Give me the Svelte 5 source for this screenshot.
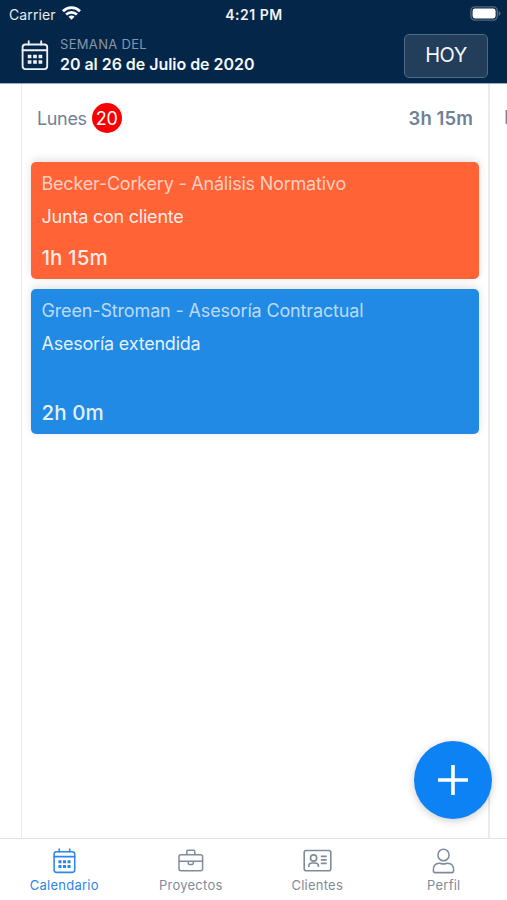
<script>
  const entries = [
    { kind: 'orange', project: 'Becker-Corkery - Análisis Normativo', task: 'Junta con cliente', time: '1h 15m' },
    { kind: 'blue', project: 'Green-Stroman - Asesoría Contractual', task: 'Asesoría extendida', time: '2h 0m' }
  ];
  const tabs = [
    { id: 'calendar', label: 'Calendario' },
    { id: 'projects', label: 'Proyectos' },
    { id: 'clients', label: 'Clientes' },
    { id: 'profile', label: 'Perfil' }
  ];
  let active = $state('calendar');
</script>

{#snippet calendarIcon(w, h)}
  <svg width={w} height={h} viewBox="0 0 28 32" fill="none" stroke="currentColor" stroke-width="1.9" stroke-linecap="round">
    <rect x="1.2" y="4.6" width="25.4" height="25.4" rx="2.8" />
    <path d="M1.2 10.6H26.6M7.5 1.2V4.6M20.4 1.2V4.6" />
    <path d="M6.5 15.2h3.8v3.6H6.5zM12.1 15.2h3.8v3.6h-3.8zM17.7 15.2h3.8v3.6h-3.8zM6.5 20.9h3.8v3.6H6.5zM12.1 20.9h3.8v3.6h-3.8zM17.7 20.9h3.8v3.6h-3.8z" fill="currentColor" stroke="none" />
  </svg>
{/snippet}

<div class="app">
  <header>
    <div class="status">
      <div class="carrier">
        <span>Carrier</span>
        <svg width="19" height="14" viewBox="0 0 19 14" fill="none" stroke="#fff" stroke-width="2.7">
          <path d="M1 5.2C5.8.5 13.2.5 18 5.2M4.1 8.5C7.2 5.6 11.8 5.6 14.9 8.5" />
          <path d="M9.5 13.7L6.5 10.7C8.2 9.1 10.8 9.1 12.5 10.7Z" fill="#fff" stroke="none" />
        </svg>
      </div>
      <span class="clock">4:21 PM</span>
      <svg class="battery" width="31" height="15" viewBox="0 0 31 15">
        <rect x=".9" y=".9" width="26.4" height="13.2" rx="4" fill="none" stroke="#53677e" stroke-width="1.4" />
        <rect x="2.6" y="2.6" width="23" height="9.8" rx="2.4" fill="#fff" />
        <path d="M28.6 5.1Q30.6 5.8 30.6 7.5T28.6 9.9Z" fill="#53677e" />
      </svg>
    </div>
    <div class="week">
      <span class="week-icon">{@render calendarIcon(28, 31)}</span>
      <div class="range">
        <span class="caption">SEMANA DEL</span>
        <span class="dates">20 al 26 de Julio de 2020</span>
      </div>
      <button class="today"><span>HOY</span></button>
    </div>
  </header>

  <main>
    <section class="day">
      <div class="day-head">
        <span class="name">Lunes</span>
        <span class="num">20</span>
        <span class="total">3h 15m</span>
      </div>
      {#each entries as e}
        <article class={e.kind}>
          <span class="project">{e.project}</span>
          <span class="task">{e.task}</span>
          <span class="time">{e.time}</span>
        </article>
      {/each}
    </section>
    <section class="next"><span>M</span></section>
    <button class="add" aria-label="Agregar">
      <svg width="30" height="30" viewBox="0 0 30 30" stroke="#fff" stroke-width="3.6"><path d="M0 15H30M15 0V30" /></svg>
    </button>
  </main>

  <nav>
    {#each tabs as t}
      <button class="tab" class:active={active === t.id} onclick={() => (active = t.id)}>
        <span class="glyph">
          {#if t.id === 'calendar'}
            {@render calendarIcon(23, 26)}
          {:else if t.id === 'projects'}
            <svg width="26" height="24" viewBox="0 0 26 24" fill="none" stroke="currentColor" stroke-width="1.5">
              <rect x="1" y="5.7" width="23.6" height="16" rx="2" />
              <path d="M8.8 5.7V2.6Q8.8 1.3 10 1.3H15.6Q16.8 1.3 16.8 2.6V5.7M1 12.2H24.6M10.3 12.2V14.2Q10.3 15.6 11.6 15.6H14Q15.3 15.6 15.3 14.2V12.2" />
            </svg>
          {:else if t.id === 'clients'}
            <svg width="29" height="24" viewBox="0 0 29 24" fill="none" stroke="currentColor" stroke-width="1.6">
              <rect x="1.2" y="1.5" width="26.6" height="20.2" rx="2" />
              <circle cx="10.6" cy="9" r="3.1" />
              <path d="M5.8 18V17Q5.8 14 9 14H12.2Q15.4 14 15.4 17V18M17.8 7.4H23.7M17.8 10.9H23.7M17.8 14.4H23.7" />
            </svg>
          {:else}
            <svg width="23" height="26" viewBox="0 0 24 26" preserveAspectRatio="none" fill="none" stroke="currentColor" stroke-width="1.6">
              <circle cx="12" cy="7" r="5.8" />
              <path d="M3.5 24.6Q1.4 24.6 1.4 22.5C1.4 17.5 4 15.3 7.6 15.3C9.3 15.3 10 16 12 16S14.7 15.3 16.4 15.3C20 15.3 22.6 17.5 22.6 22.5Q22.6 24.6 20.5 24.6Z" />
            </svg>
          {/if}
        </span>
        <span class="label">{t.label}</span>
      </button>
    {/each}
  </nav>
</div>

<style>
  :global(body) { margin: 0; background: #fff; }
  .app {
    width: 507px; height: 900px; display: flex; flex-direction: column;
    overflow: hidden; position: relative; background: #fff;
    font-family: Inter, "Liberation Sans", sans-serif; white-space: nowrap;
  }
  .app * { box-sizing: border-box; }
  button { font-family: inherit; border: 0; padding: 0; margin: 0; background: none; cursor: pointer; }
  svg { display: block; flex: none; }
  header { height: 84px; flex: none; background: #042648; border-bottom: 1px solid #9aabbc; color: #fff; }
  .status { height: 28px; display: grid; grid-template-columns: 1fr auto 1fr; align-items: center; padding: 0 6px 0 9px; }
  .carrier { display: flex; align-items: center; gap: 6px; font-size: 14px; letter-spacing: .1px; color: #e6ebf0; }
  .carrier svg { margin-top: -2px; }
  .clock { font-size: 14px; letter-spacing: .5px; font-weight: 600; color: #f1f4f7; margin-right: 2px; }
  .battery { justify-self: end; margin-top: -2px; }
  .week { height: 55px; display: flex; align-items: center; padding: 0 19px 0 21px; }
  .week-icon { width: 28px; margin-right: 11px; color: #eef2f6; }
  .range { display: flex; flex-direction: column; flex: 1; margin-top: -1px; }
  .caption { font-size: 13px; letter-spacing: .32px; line-height: 18px; color: #8798aa; }
  .dates { font-size: 16px; letter-spacing: -.04px; line-height: 22px; font-weight: 600; color: #f4f7fa; }
  .today {
    width: 84px; height: 44px; border: 1px solid #506880; border-radius: 5px; padding-bottom: 2px;
    background: #223e5b; color: #f4f7fa; font-size: 20px; letter-spacing: -.6px;
  }
  main { flex: 1; min-height: 0; display: flex; position: relative; padding-left: 21px; background: #fff; }
  .day { width: 469px; flex: none; border: solid #ebebeb; border-width: 0 2px 0 1px; padding: 0 9px; display: flex; flex-direction: column; }
  .day-head { height: 68px; display: flex; align-items: center; padding: 0 6px; flex: none; margin-bottom: 10px; color: #718096; font-size: 18px; }
  .name { letter-spacing: -.35px; }
  .num { width: 30px; height: 30px; border-radius: 50%; background: #fb0000; color: #fff; display: grid; place-items: center; margin-left: 5px; letter-spacing: -.2px; }
  .total { margin-left: auto; font-size: 18.5px; letter-spacing: .1px; font-weight: 600; }
  article {
    height: 117px; margin-bottom: 10px; border-radius: 5px; padding: 10px 10px 9px 10.5px; flex: none;
    display: flex; flex-direction: column; color: rgba(255, 255, 255, .9);
    box-shadow: 0 -2px 9px rgba(0, 0, 0, .13);
  }
  .orange { background: #ff6336; }
  .blue { height: 145px; background: #218ae5; }
  .project { font-size: 18px; letter-spacing: -.21px; line-height: 23px; opacity: .78; }
  .blue .project { letter-spacing: -.15px; }
  .task { font-size: 18px; letter-spacing: -.22px; line-height: 23px; margin-top: 10px; }
  .time { font-size: 20.5px; letter-spacing: .1px; line-height: 24px; margin-top: auto; font-weight: 500; }
  .next { padding: 23px 0 0 14px; color: #718096; font-size: 18px; line-height: 22px; }
  .add {
    position: absolute; left: 414px; top: 657px; width: 78px; height: 78px; border-radius: 50%;
    background: #0d82f5; display: grid; place-items: center; box-shadow: 0 2px 8px rgba(0, 0, 0, .2);
  }
  nav { height: 62px; flex: none; display: grid; grid-template-columns: repeat(4, 1fr); padding-left: 1px; border-top: 1px solid #e2e2e2; background: #fff; }
  .tab { display: flex; flex-direction: column; align-items: center; color: #7f8b9b; padding-top: 8px; }
  .tab.active { color: #2c86e6; }
  .glyph { height: 28px; display: grid; place-items: center; }
  .label { font-size: 13px; letter-spacing: .25px; line-height: 18px; margin-top: 1px; }
</style>
